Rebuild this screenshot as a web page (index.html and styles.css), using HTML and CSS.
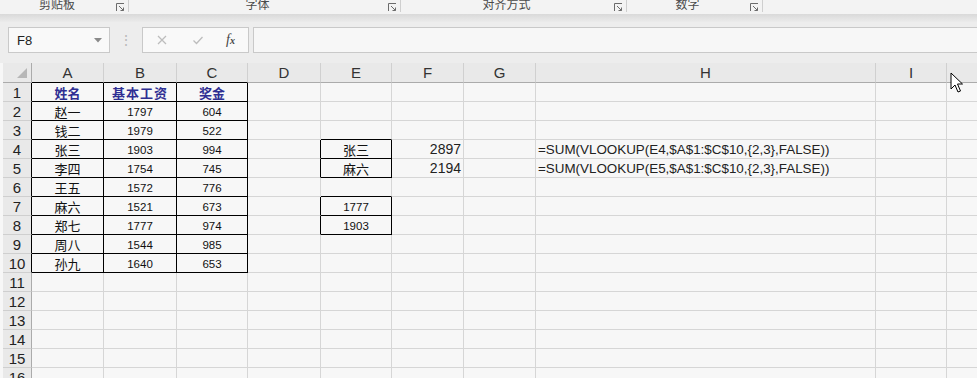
FILE: index.html
```html
<!DOCTYPE html>
<html lang="zh-CN">
	<head>
		<title>工作表</title>
		<meta charset="utf-8">
		<link rel="stylesheet" href="styles.css">
	</head>

	<body>
	<div class="window">

		<!-- ribbon group labels (cut off at the top) -->
		<div class="ribbon">
			<div class="group g-clip"><span class="glabel">剪贴板</span><svg class="launch" viewBox="0 0 9 9"><path d="M0.5 8 V0.5 H8" /><path d="M3 3 L7.5 7.5 M7.5 4.5 V7.5 H4.5" /></svg></div>
			<div class="group g-font"><span class="glabel">字体</span><svg class="launch" viewBox="0 0 9 9"><path d="M0.5 8 V0.5 H8" /><path d="M3 3 L7.5 7.5 M7.5 4.5 V7.5 H4.5" /></svg></div>
			<div class="group g-align"><span class="glabel">对齐方式</span><svg class="launch" viewBox="0 0 9 9"><path d="M0.5 8 V0.5 H8" /><path d="M3 3 L7.5 7.5 M7.5 4.5 V7.5 H4.5" /></svg></div>
			<div class="group g-num"><span class="glabel">数字</span><svg class="launch" viewBox="0 0 9 9"><path d="M0.5 8 V0.5 H8" /><path d="M3 3 L7.5 7.5 M7.5 4.5 V7.5 H4.5" /></svg></div>
		</div>
		<div class="shade"></div>

		<!-- name box + formula bar -->
		<div class="fbar">
			<div class="namebox">
				<span>F8</span>
				<svg class="drop" viewBox="0 0 8 5"><path d="M0 0 H8 L4 4.5 Z" /></svg>
			</div>
			<div class="dots">&#8942;</div>
			<div class="fxbox">
				<svg class="ico" viewBox="0 0 12 12"><path d="M2 2 L10 10 M10 2 L2 10" /></svg>
				<svg class="ico" viewBox="0 0 12 12"><path d="M1.5 6.5 L4.5 9.5 L10.5 3" /></svg>
				<span class="fx"><i>f</i><small>x</small></span>
			</div>
			<div class="finput"></div>
		</div>

		<!-- sheet -->
		<div class="sheet">
			<div class="ch corner"><svg viewBox="0 0 10 10"><path d="M10 0 V10 H0 Z" /></svg></div>
			<div class="ch kb">A</div><div class="ch kb">B</div><div class="ch kb">C</div><div class="ch">D</div><div class="ch">E</div><div class="ch">F</div><div class="ch">G</div><div class="ch">H</div><div class="ch">I</div><div class="ch last"></div>

			<div class="rh kr">1</div><div class="cell k hd">姓名</div><div class="cell k hd wide">基本工资</div><div class="cell k hd">奖金</div><div class="cell"></div><div class="cell"></div><div class="cell"></div><div class="cell"></div><div class="cell"></div><div class="cell"></div><div class="cell last"></div>
			<div class="rh kr">2</div><div class="cell k zh">赵一</div><div class="cell k num">1797</div><div class="cell k num">604</div><div class="cell"></div><div class="cell"></div><div class="cell"></div><div class="cell"></div><div class="cell"></div><div class="cell"></div><div class="cell last"></div>
			<div class="rh kr">3</div><div class="cell k zh">钱二</div><div class="cell k num">1979</div><div class="cell k num">522</div><div class="cell"></div><div class="cell kb"></div><div class="cell"></div><div class="cell"></div><div class="cell"></div><div class="cell"></div><div class="cell last"></div>
			<div class="rh kr">4</div><div class="cell k zh">张三</div><div class="cell k num">1903</div><div class="cell k num">994</div><div class="cell kr"></div><div class="cell k zh">张三</div><div class="cell big">2897</div><div class="cell"></div><div class="cell formula">=SUM(VLOOKUP(E4,$A$1:$C$10,{2,3},FALSE))</div><div class="cell"></div><div class="cell last"></div>
			<div class="rh kr">5</div><div class="cell k zh">李四</div><div class="cell k num">1754</div><div class="cell k num">745</div><div class="cell kr"></div><div class="cell k zh">麻六</div><div class="cell big">2194</div><div class="cell"></div><div class="cell formula">=SUM(VLOOKUP(E5,$A$1:$C$10,{2,3},FALSE))</div><div class="cell"></div><div class="cell last"></div>
			<div class="rh kr">6</div><div class="cell k zh">王五</div><div class="cell k num">1572</div><div class="cell k num">776</div><div class="cell"></div><div class="cell kb"></div><div class="cell"></div><div class="cell"></div><div class="cell"></div><div class="cell"></div><div class="cell last"></div>
			<div class="rh kr">7</div><div class="cell k zh">麻六</div><div class="cell k num">1521</div><div class="cell k num">673</div><div class="cell kr"></div><div class="cell k num">1777</div><div class="cell"></div><div class="cell"></div><div class="cell"></div><div class="cell"></div><div class="cell last"></div>
			<div class="rh kr">8</div><div class="cell k zh">郑七</div><div class="cell k num">1777</div><div class="cell k num">974</div><div class="cell kr"></div><div class="cell k num">1903</div><div class="cell"></div><div class="cell"></div><div class="cell"></div><div class="cell"></div><div class="cell last"></div>
			<div class="rh kr">9</div><div class="cell k zh">周八</div><div class="cell k num">1544</div><div class="cell k num">985</div><div class="cell"></div><div class="cell"></div><div class="cell"></div><div class="cell"></div><div class="cell"></div><div class="cell"></div><div class="cell last"></div>
			<div class="rh kr">10</div><div class="cell k zh">孙九</div><div class="cell k num">1640</div><div class="cell k num">653</div><div class="cell"></div><div class="cell"></div><div class="cell"></div><div class="cell"></div><div class="cell"></div><div class="cell"></div><div class="cell last"></div>
			<div class="rh">11</div><div class="cell"></div><div class="cell"></div><div class="cell"></div><div class="cell"></div><div class="cell"></div><div class="cell"></div><div class="cell"></div><div class="cell"></div><div class="cell"></div><div class="cell last"></div>
			<div class="rh">12</div><div class="cell"></div><div class="cell"></div><div class="cell"></div><div class="cell"></div><div class="cell"></div><div class="cell"></div><div class="cell"></div><div class="cell"></div><div class="cell"></div><div class="cell last"></div>
			<div class="rh">13</div><div class="cell"></div><div class="cell"></div><div class="cell"></div><div class="cell"></div><div class="cell"></div><div class="cell"></div><div class="cell"></div><div class="cell"></div><div class="cell"></div><div class="cell last"></div>
			<div class="rh">14</div><div class="cell"></div><div class="cell"></div><div class="cell"></div><div class="cell"></div><div class="cell"></div><div class="cell"></div><div class="cell"></div><div class="cell"></div><div class="cell"></div><div class="cell last"></div>
			<div class="rh">15</div><div class="cell"></div><div class="cell"></div><div class="cell"></div><div class="cell"></div><div class="cell"></div><div class="cell"></div><div class="cell"></div><div class="cell"></div><div class="cell"></div><div class="cell last"></div>
			<div class="rh">16</div><div class="cell"></div><div class="cell"></div><div class="cell"></div><div class="cell"></div><div class="cell"></div><div class="cell"></div><div class="cell"></div><div class="cell"></div><div class="cell"></div><div class="cell last"></div>
		</div>

		<!-- mouse pointer -->
		<svg class="pointer" viewBox="0 0 13 21"><path d="M1 1 V17 L5 13 L8 20 L10.5 19 L7.5 12 H12.5 Z" /></svg>
	</div>
	</body>
</html>
```

FILE: styles.css
```css
body {
	margin: 0;
	background-color: #f7f7f7;
	font-family: 'Liberation Sans', Arial, sans-serif;
}

.window {
	position: relative;
	width: 977px;
	height: 378px;
	overflow: hidden;
	background-color: #f7f7f7;
}

/* ribbon group labels */
.ribbon {
	display: flex;
	height: 14px;
	overflow: hidden;
	background-color: #f3f3f3;
}

.group {
	display: flex;
	position: relative;
	justify-content: center;
	box-sizing: border-box;
	padding-right: 14px;
	border-right: 1px solid #cfcfcf;
	height: 12px;
}

.glabel {
	font-family: 'Noto Sans CJK SC', sans-serif;
	font-size: 12px;
	line-height: 12px;
	color: #4a4a4a;
	margin-top: -2px;
}

.g-clip { width: 129px; }
.g-font { width: 272px; }
.g-align { width: 226px; }
.g-num { width: 136px; }

.launch {
	position: absolute;
	right: 3px;
	top: 3px;
	width: 9px;
	height: 9px;
	fill: none;
	stroke: #6b6b6b;
	stroke-width: 1;
}

.shade {
	height: 8px;
	background: linear-gradient(#d9d9d9, #ebebeb);
}

/* formula bar */
.fbar {
	display: flex;
	height: 41px;
	padding-top: 5px;
	box-sizing: border-box;
	background-color: #ededed;
}

.namebox {
	display: flex;
	align-items: center;
	justify-content: space-between;
	margin-left: 8px;
	width: 102px;
	height: 26px;
	padding: 0 7px 0 8px;
	box-sizing: border-box;
	background-color: #f9f9f9;
	border: 1px solid #c9c9c9;
	font-size: 13px;
	color: #222;
}

.drop {
	width: 8px;
	height: 5px;
	fill: #8a8a8a;
}

.dots {
	width: 32px;
	text-align: center;
	font-size: 14px;
	line-height: 26px;
	color: #b9b9b9;
}

.fxbox {
	display: flex;
	align-items: center;
	width: 107px;
	height: 26px;
	box-sizing: border-box;
	padding-left: 13px;
	gap: 24px;
	background-color: #f9f9f9;
	border: 1px solid #c9c9c9;
}

.ico {
	width: 12px;
	height: 12px;
	fill: none;
	stroke: #bdbdbd;
	stroke-width: 1.3;
}

.fx {
	font-family: 'Liberation Serif', serif;
	font-size: 14px;
	color: #444;
	margin-left: -2px;
}

.fx small {
	font-size: 10px;
	font-style: italic;
	font-weight: bold;
}

.finput {
	flex: 1;
	margin-left: 4px;
	height: 26px;
	box-sizing: border-box;
	background-color: #f7f7f7;
	border: 1px solid #c9c9c9;
	border-right: none;
}

/* worksheet grid */
.sheet {
	display: grid;
	margin-left: 3px;
	grid-template-columns: 29px 72px 73px 71px 73px 71px 72px 72px 340px 71px 1fr;
	grid-template-rows: 20px repeat(16, 19px);
}

.sheet > div {
	box-sizing: border-box;
	border-right: 1px solid #d6d6d6;
	border-bottom: 1px solid #d6d6d6;
	white-space: nowrap;
	display: flex;
	align-items: center;
	justify-content: center;
}

.ch {
	background-color: #e9e9e9;
	font-size: 15px;
	color: #333;
	border-right-color: #d0d0d0 !important;
	border-bottom-color: #ababab !important;
}

.corner {
	border-right-color: #ababab !important;
	justify-content: flex-end !important;
	align-items: flex-end !important;
	padding: 0 4px 4px 0;
}

.corner svg {
	width: 10px;
	height: 10px;
	fill: #b7b7b7;
}

.rh {
	background-color: #e9e9e9;
	font-size: 15px;
	color: #222;
	border-right-color: #ababab !important;
	border-bottom-color: #cfcfcf !important;
	justify-content: center;
}

.sheet > .last {
	border-right: none;
}

/* black borders around the tables */
.sheet > .k {
	border-right-color: #000;
	border-bottom-color: #000;
}

.sheet > .kr {
	border-right-color: #000 !important;
}

.sheet > .kb {
	border-bottom-color: #000 !important;
}

.zh {
	font-family: 'Noto Sans CJK SC', sans-serif;
	font-size: 13px;
	color: #111;
}

.hd {
	font-family: 'Noto Sans CJK SC', sans-serif;
	font-size: 13px;
	font-weight: bold;
	color: #2f2f93;
}

.wide {
	letter-spacing: 1px;
}

.num {
	font-size: 11.5px;
	color: #111;
	padding-top: 1px;
}

.sheet > .big {
	justify-content: flex-end;
	padding-right: 2px;
	font-size: 14px;
	color: #222;
}

.sheet > .formula {
	justify-content: flex-start;
	padding-left: 2px;
	font-size: 13.4px;
	color: #222;
}

/* mouse pointer over the header */
.pointer {
	position: absolute;
	left: 950px;
	top: 72px;
	width: 13px;
	height: 21px;
	fill: #fff;
	stroke: #000;
	stroke-width: 1;
}
```
